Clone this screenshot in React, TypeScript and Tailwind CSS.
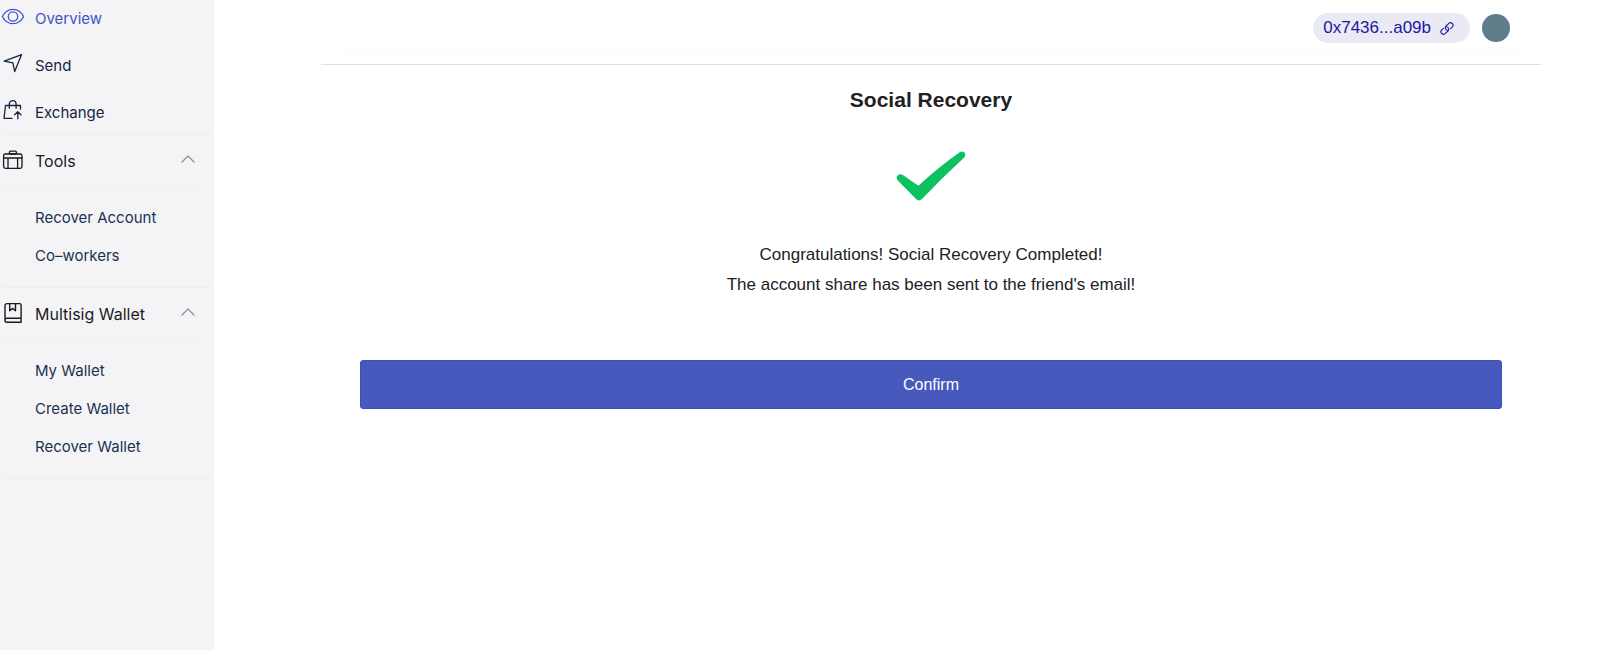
import type { ReactNode } from "react";

const stroke = {
  fill: "none",
  stroke: "currentColor",
  strokeLinecap: "round" as const,
  strokeLinejoin: "round" as const,
};

const EyeIcon = () => (
  <svg width="24" height="24" viewBox="0 0 24 24" strokeWidth="1.3" {...stroke} aria-hidden="true">
    <path d="M1.400 11.500C3.600 7 7.500 4.300 12 4.300s8.400 2.700 10.600 7.200c-2.200 4.500-6.100 7.200-10.600 7.200S3.600 16 1.400 11.500Z" />
    <circle cx="12" cy="11.500" r="4.700" />
  </svg>
);

const SendIcon = () => (
  <svg width="24" height="24" viewBox="0 0 24 24" strokeWidth="1.3" {...stroke} aria-hidden="true">
    <path d="M3.200 9.200 20.600 2.600 13.700 19.600 11.900 10.900Z" />
  </svg>
);

const ExchangeIcon = () => (
  <svg width="24" height="24" viewBox="0 0 24 24" strokeWidth="1.3" {...stroke} aria-hidden="true">
    <path d="M11 19.300H3L4.500 6.500h15V10M8.300 9.300V5a3.400 3.400 0 0 1 6.800 0v4.300M16.800 19.800v-6.800M13.600 15.800l3.200-3 3.200 3" />
  </svg>
);

const ToolsIcon = () => (
  <svg width="24" height="24" viewBox="0 0 24 24" strokeWidth="1.3" {...stroke} aria-hidden="true">
    <rect x="2.600" y="7" width="18.400" height="14.400" rx="1.800" />
    <path d="M2.600 11h18.400M7 11v10.400M16.600 11v10.400" />
    <rect x="8.400" y="4.200" width="7" height="2.800" rx="1" />
  </svg>
);

const WalletIcon = () => (
  <svg width="24" height="24" viewBox="0 0 24 24" strokeWidth="1.4" {...stroke} aria-hidden="true">
    <path d="M6 3.600h12.600a1.500 1.500 0 0 1 1.500 1.500v17.100H6a2 2 0 0 1-2-2V5.600a2 2 0 0 1 2-2ZM4 20.200a2 2 0 0 1 2-2h14.100M8.700 3.800v7l2.900-2.400 2.900 2.400v-7" />
  </svg>
);

const ChevronIcon = () => (
  <svg width="14" height="8" viewBox="0 0 14 8" strokeWidth="1.2" {...stroke} aria-hidden="true">
    <path d="M1 7l6-6 6 6" />
  </svg>
);

const LinkIcon = () => (
  <svg width="14" height="14" viewBox="0 0 14 14" strokeWidth="1.1" {...stroke} aria-hidden="true">
    <g transform="rotate(-42 7 7.500)">
      <path d="M6.600 9.400A2.500 2.500 0 0 1 7.600 5h4.200a2.500 2.500 0 0 1 0 5h-2.200" />
      <path d="M7.400 5.600a2.500 2.500 0 0 1-1 4.400H2.200a2.500 2.500 0 0 1 0-5h2.200" />
    </g>
  </svg>
);

function NavItem({ icon, label, active }: { icon: ReactNode; label: string; active?: boolean }) {
  return (
    <li>
      <a
        href="#"
        aria-current={active ? "page" : undefined}
        className={
          active
            ? "flex h-[38px] items-center gap-[10px] text-[#4453c4]"
            : "flex h-[38px] items-center gap-[10px] text-[#12263f]"
        }
      >
        <span className="pb-1">{icon}</span>
        {label}
      </a>
    </li>
  );
}

function NavSection({ icon, title, items }: { icon: ReactNode; title: string; items: string[] }) {
  return (
    <section className="border-b border-[#eeeef1]">
      <button
        type="button"
        aria-expanded="true"
        className="flex h-[50px] w-full items-center gap-[10px] pr-[19px] pb-0.5 text-left text-[16px] text-[#1b1b1f]"
      >
        <span>{icon}</span>
        <span className="flex-1 pt-1">{title}</span>
        <span className="text-[#8e8e93]">
          <ChevronIcon />
        </span>
      </button>
      <ul className="mr-4 -mt-px border-t border-[#f0f0f3] pt-[14px] pb-3 pl-[34px] text-[15px] text-[#1b3150]">
        {items.map((item) => (
          <li key={item}>
            <a href="#" className="flex h-[38px] items-center">
              {item}
            </a>
          </li>
        ))}
      </ul>
    </section>
  );
}

export default function App() {
  return (
    <div className="flex min-h-screen bg-white font-['Liberation_Sans',Arial,sans-serif] text-[#212124]">
      <aside className="w-[214px] shrink-0 bg-[#f4f4f7] font-['Inter','Liberation_Sans',sans-serif]">
        <nav className="pl-px">
          <ul className="flex flex-col gap-[9px] border-b border-[#eeeef1] pb-0.5 text-[15px]">
            <NavItem icon={<EyeIcon />} label="Overview" active />
            <NavItem icon={<SendIcon />} label="Send" />
            <NavItem icon={<ExchangeIcon />} label="Exchange" />
          </ul>
          <NavSection icon={<ToolsIcon />} title="Tools" items={["Recover Account", "Co–workers"]} />
          <NavSection
            icon={<WalletIcon />}
            title="Multisig Wallet"
            items={["My Wallet", "Create Wallet", "Recover Wallet"]}
          />
        </nav>
      </aside>
      <div className="flex-1 pr-[59px] pl-[107px]">
        <header className="border-b border-[#dfdfe3] pb-[11px]">
          <div className="mx-5 flex items-center justify-end gap-3 border-b border-[#fafafa] pt-[13px] pr-[11px] pb-[9px]">
            <a
              href="#"
              className="flex h-[30px] items-center gap-[9px] rounded-full bg-[#eaeaf5] pr-4 pl-[10px] text-[17px] text-[#2019a0]"
            >
              0x7436...a09b
              <LinkIcon />
            </a>
            <button type="button" aria-label="Account" className="size-7 rounded-full bg-[#607d8b]" />
          </div>
        </header>
        <main className="flex flex-col items-center px-[39px] pt-5">
          <h1 className="text-[21px] leading-[30px] font-bold">Social Recovery</h1>
          <svg width="70" height="50" viewBox="0 0 70 50" className="mt-9" aria-hidden="true">
            <path
              d="M1.600 24.600Q4.200 22 7.200 24.200L22.400 34.800Q42 16.500 63.600 1.200Q66.400 -.4 68.400 1.600Q70.200 4 68.200 6.600Q46 27 26 48Q23 50.800 20 48L1.800 29.400Q-.4 26.800 1.600 24.600Z"
              fill="#0dc160"
            />
          </svg>
          <div className="mt-[39px] text-center text-[17px] leading-[30px]">
            <p>Congratulations! Social Recovery Completed!</p>
            <p>The account share has been sent to the friend's email!</p>
          </div>
          <button
            type="button"
            className="mt-[60px] h-[49px] w-full rounded-[3px] border border-[#3a50bd] bg-[#4759bd] text-[16px] text-white"
          >
            Confirm
          </button>
        </main>
      </div>
    </div>
  );
}
